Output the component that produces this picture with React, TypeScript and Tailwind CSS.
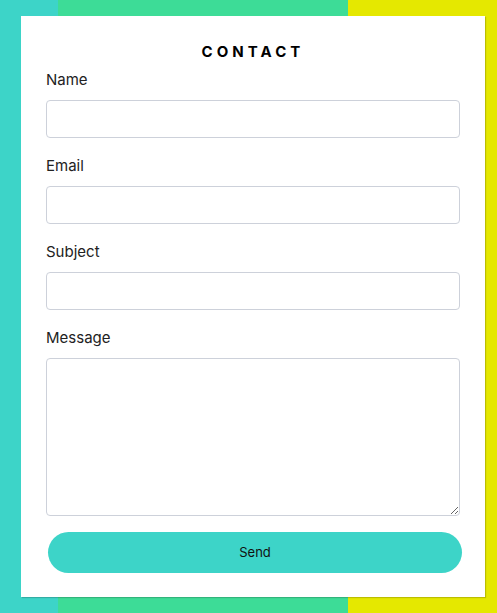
import React from 'react';

const fields = ['Name', 'Email', 'Subject'];

const App = () => {
  return (
    <div className="relative min-h-[613px] w-full bg-[linear-gradient(to_right,#3dd4c8_0px,#3dd4c8_58px,#3ddc97_58px,#3ddc97_348px,#e5e800_348px,#e5e800_100%)] pt-4 pb-4 pl-[21px] pr-[12px] font-['Inter',sans-serif]">
      <form className="w-[464px] bg-white px-[25px] pt-[24px] pb-6 shadow-[1px_1px_1px_rgba(0,0,0,0.18)]">
        <h1 className="text-center text-[15px] leading-6 font-bold tracking-[0.27em] text-black">CONTACT</h1>
        <div className="mt-[4px] flex flex-col gap-4">
          {fields.map((f) => (
            <label key={f} className="flex flex-col gap-2">
              <span className="text-[15px] leading-6 text-[#222]">{f}</span>
              <input type="text" className="h-[38px] w-full rounded-[4px] border border-[#cdd1da] bg-white px-2" />
            </label>
          ))}
          <label className="flex flex-col gap-2">
            <span className="text-[15px] leading-6 text-[#222]">Message</span>
            <textarea className="h-[158px] w-full rounded-[4px] border border-[#cdd1da] bg-white px-2" />
          </label>
        </div>
        <button type="button" className="mt-4 ml-[2px] h-[41px] w-full rounded-full bg-[#3dd4c8] text-[13px] text-[#111]">
          Send
        </button>
      </form>
    </div>
  );
};

export default App;
